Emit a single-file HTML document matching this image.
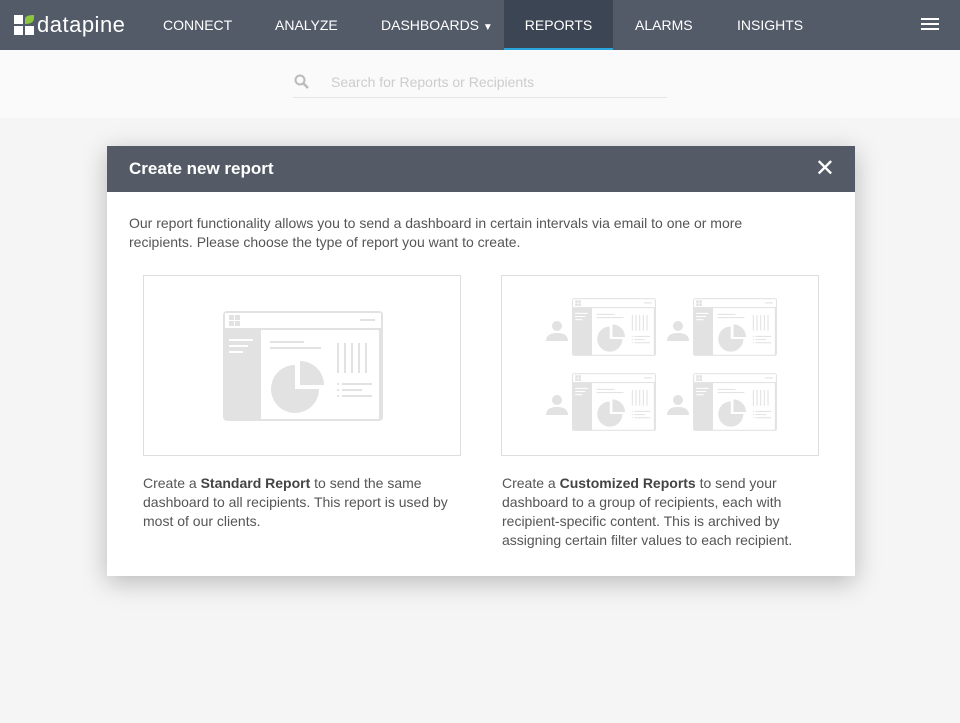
<!DOCTYPE html>
<html><head><meta charset="utf-8"><style>
*{margin:0;padding:0;box-sizing:border-box}
body{width:960px;height:723px;background:#f5f5f5;font-family:"Liberation Sans",Arial,sans-serif;position:relative;overflow:hidden}
.nav{position:absolute;left:0;top:0;width:960px;height:50px;background:#535b68}
.nav a{position:absolute;top:0;height:50px;line-height:50px;color:#fff;font-size:14px;text-decoration:none}
.act{background:#3c4553;border-bottom:2px solid #2aa6dc}
.search{position:absolute;left:0;top:50px;width:960px;height:68px;background:#fafafa}
.modal{position:absolute;left:107px;top:146px;width:748px;height:430px;background:#fff;box-shadow:0 6px 24px rgba(0,0,0,.25)}
.mh{height:46px;background:#545b67;color:#fff;font-weight:bold;font-size:17px;line-height:46px;padding-left:22px;position:relative}
.p{position:absolute;color:#555;font-size:14px;line-height:19px}
.card{position:absolute;top:129px;width:318px;height:181px;border:1px solid #ddd;background:#fff}
b{color:#444}
</style></head><body>
<svg width="0" height="0" style="position:absolute"><defs>
<symbol id="d" viewBox="0 0 164 114">
<rect x="2" y="2" width="160" height="110" rx="4" fill="#e2e2e2"/>
<rect x="4" y="4" width="156" height="15" fill="#fff"/>
<rect x="40" y="21" width="118" height="89" fill="#fff"/>
<rect x="8" y="6" width="5" height="5" fill="#e2e2e2"/><rect x="14" y="6" width="5" height="5" fill="#e2e2e2"/><rect x="8" y="12" width="5" height="5" fill="#e2e2e2"/><rect x="14" y="12" width="5" height="5" fill="#e2e2e2"/>
<rect x="139" y="10" width="15" height="2" fill="#e2e2e2"/>
<rect x="8" y="30" width="24" height="2" fill="#fff"/><rect x="8" y="36" width="19" height="2" fill="#fff"/><rect x="8" y="42" width="14" height="2" fill="#fff"/>
<rect x="49" y="32" width="34" height="2" fill="#e2e2e2"/><rect x="49" y="38" width="51" height="2" fill="#e2e2e2"/>
<path d="M74 56 A24 24 0 1 0 98 80 L74 80 Z" fill="#e2e2e2"/>
<path d="M79 52 A24 24 0 0 1 103 76 L79 76 Z" fill="#e2e2e2"/>
<g fill="#e2e2e2"><rect x="116" y="34" width="2" height="30"/><rect x="123" y="34" width="2" height="30"/><rect x="130" y="34" width="2" height="30"/><rect x="137" y="34" width="2" height="30"/><rect x="144" y="34" width="2" height="30"/>
<rect x="116" y="74" width="2" height="2"/><rect x="121" y="74" width="30" height="2"/><rect x="116" y="80" width="2" height="2"/><rect x="121" y="80" width="20" height="2"/><rect x="116" y="86" width="2" height="2"/><rect x="121" y="86" width="30" height="2"/></g>
</symbol>
<symbol id="u" viewBox="0 0 22 22"><circle cx="11" cy="6" r="5" fill="#e2e2e2"/><path d="M0 21 Q0 13 11 13 Q22 13 22 21 Z" fill="#e2e2e2"/></symbol>
</defs></svg>
<div class="nav">
<svg style="position:absolute;left:14px;top:15px" width="20" height="20"><rect x="0" y="0" width="9" height="9" fill="#fff"/><path d="M11 9 L11 4 Q11 0 20 0 L20 3 Q20 9 11 9Z" fill="#8cc63f"/><rect x="0" y="11" width="9" height="9" fill="#fff"/><rect x="11" y="11" width="9" height="9" fill="#fff"/></svg>
<a style="left:37px;font-size:22px;letter-spacing:0.5px">datapine</a>
<a style="left:163px">CONNECT</a><a style="left:275px">ANALYZE</a>
<a style="left:381px">DASHBOARDS <span style="font-size:10px">▼</span></a>
<a class="act" style="left:504px;width:109px;text-align:center">REPORTS</a>
<a style="left:635px">ALARMS</a><a style="left:737px">INSIGHTS</a>
<div style="position:absolute;left:921px;top:18px;width:18px;height:2px;background:#fff;box-shadow:0 5px 0 #fff,0 10px 0 #fff"></div>
</div>
<div class="search">
<svg style="position:absolute;left:294px;top:24px" width="16" height="16"><circle cx="6" cy="6" r="4.5" stroke="#bbb" stroke-width="2" fill="none"/><path d="M9.5 9.5 L14 14" stroke="#bbb" stroke-width="2.5"/></svg>
<div style="position:absolute;left:331px;top:24px;color:#ccc;font-size:14px">Search for Reports or Recipients</div>
<div style="position:absolute;left:293px;top:47px;width:374px;height:1px;background:#e6e6e6"></div>
</div>
<div class="modal">
<div class="mh">Create new report<span style="position:absolute;right:20px;top:0;font-size:24px;font-weight:normal">✕</span></div>
<div class="p" style="left:22px;top:68px;width:650px">Our report functionality allows you to send a dashboard in certain intervals via email to one or more recipients. Please choose the type of report you want to create.</div>
<div class="card" style="left:36px"><svg style="position:absolute;left:77px;top:33px" width="164" height="114"><use href="#d"/></svg></div>
<div class="card" style="left:394px">
<svg style="position:absolute;left:44px;top:44px" width="22" height="22"><use href="#u"/></svg>
<svg style="position:absolute;left:69px;top:20px" width="86" height="62"><use href="#d"/></svg>
<svg style="position:absolute;left:165px;top:44px" width="22" height="22"><use href="#u"/></svg>
<svg style="position:absolute;left:190px;top:20px" width="86" height="62"><use href="#d"/></svg>
<svg style="position:absolute;left:44px;top:118px" width="22" height="22"><use href="#u"/></svg>
<svg style="position:absolute;left:69px;top:95px" width="86" height="62"><use href="#d"/></svg>
<svg style="position:absolute;left:165px;top:118px" width="22" height="22"><use href="#u"/></svg>
<svg style="position:absolute;left:190px;top:95px" width="86" height="62"><use href="#d"/></svg>
</div>
<div class="p" style="left:36px;top:328px;width:320px">Create a <b>Standard Report</b> to send the same dashboard to all recipients. This report is used by most of our clients.</div>
<div class="p" style="left:395px;top:328px;width:330px">Create a <b>Customized Reports</b> to send your dashboard to a group of recipients, each with recipient-specific content. This is archived by assigning certain filter values to each recipient.</div>
</div>
</body></html>
